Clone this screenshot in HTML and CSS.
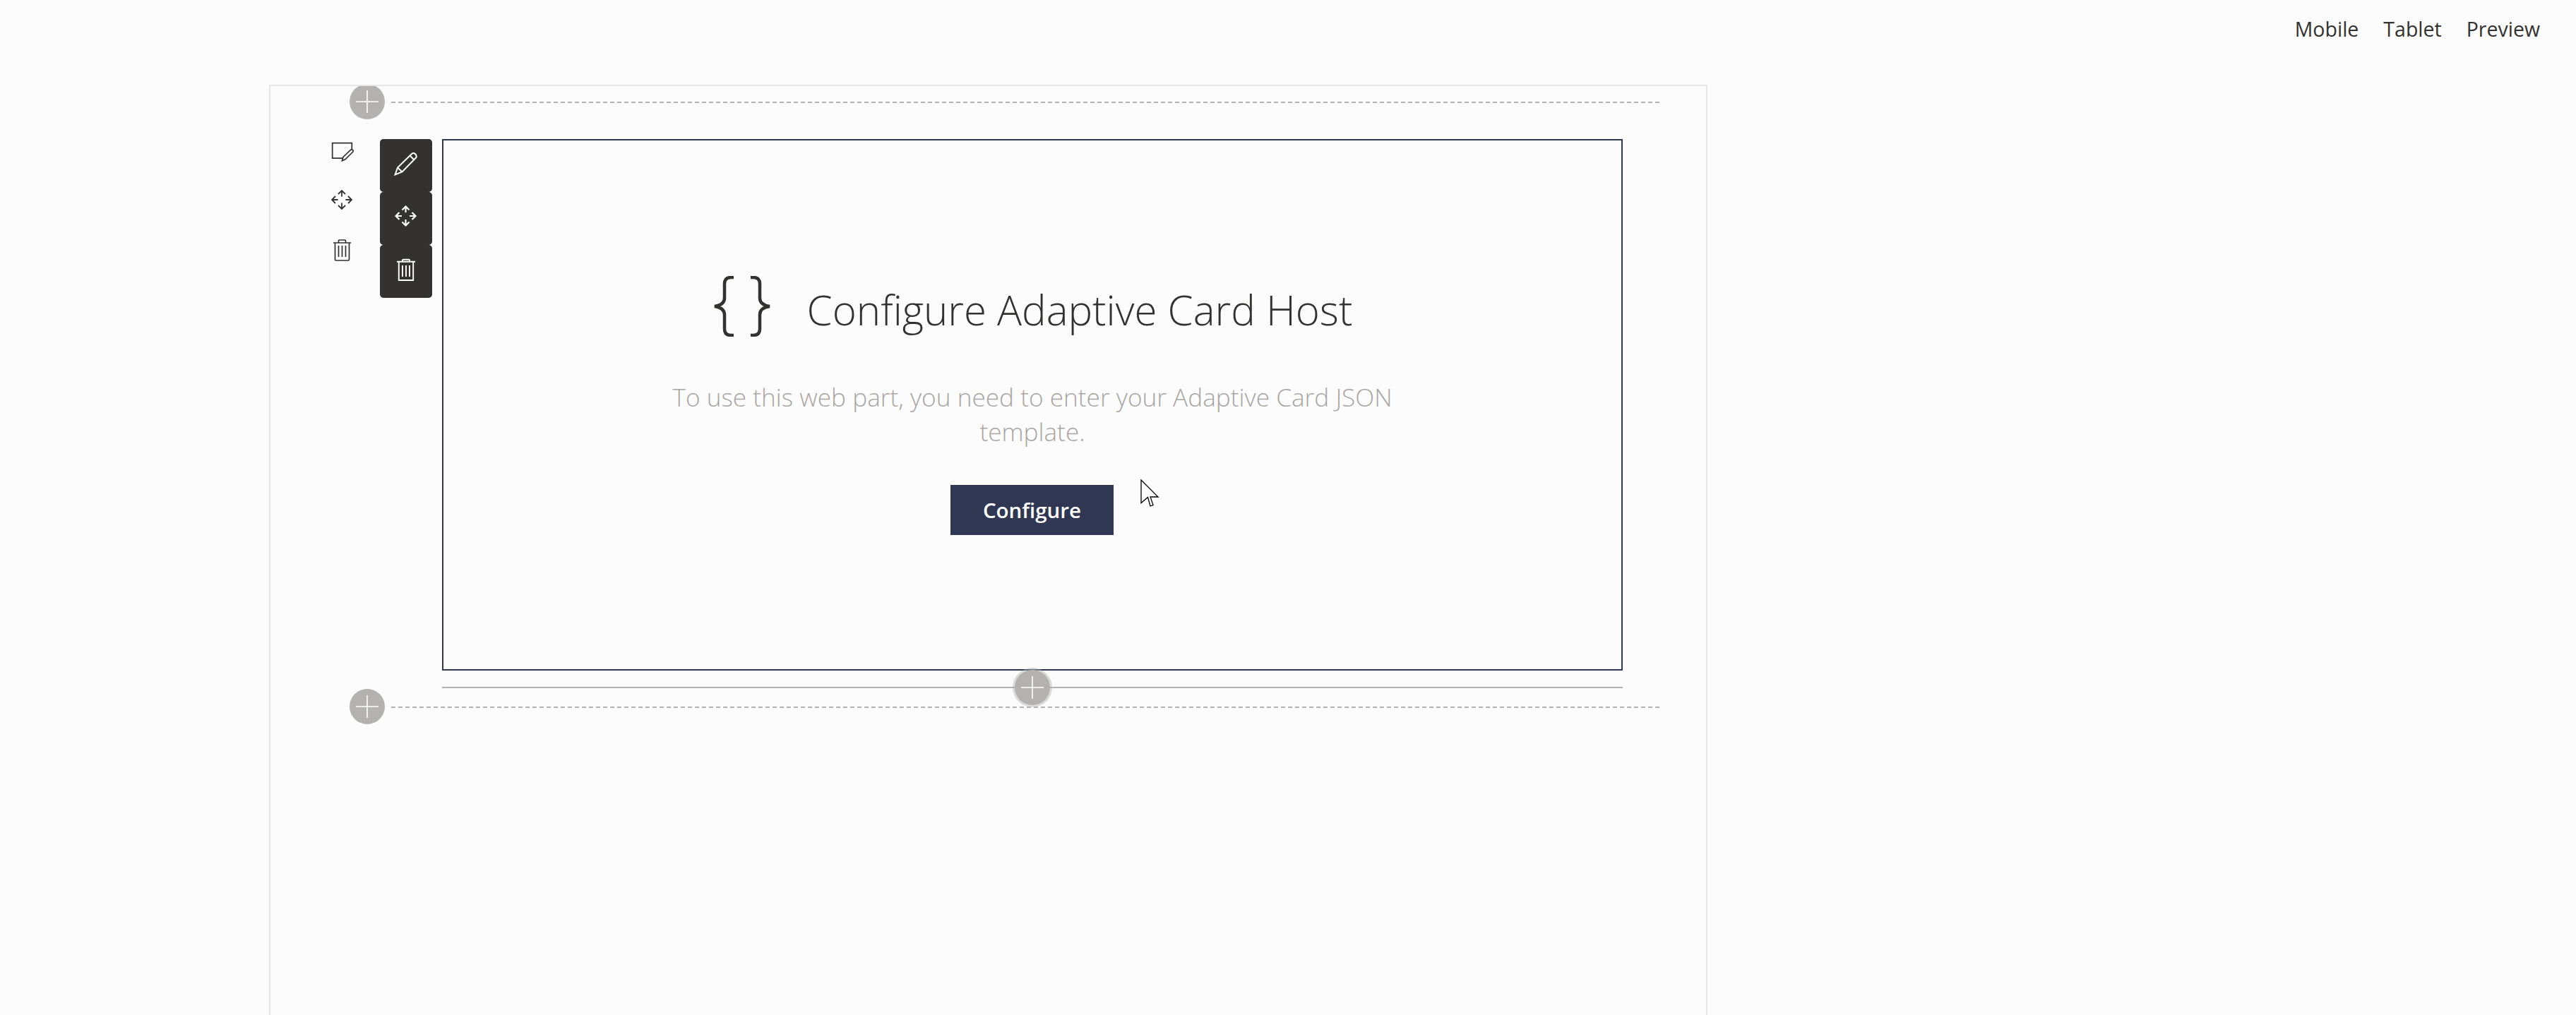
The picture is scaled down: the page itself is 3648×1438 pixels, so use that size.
FILE: index.html
```html
<!DOCTYPE html>
<html lang="en">

<head>
	<meta charset="UTF-8">
	<title>Configure Adaptive Card Host</title>
	<link rel="stylesheet" href="styles.css">
</head>

<body>
	<nav class="top-nav">
		<a class="nav-link">Mobile</a>
		<a class="nav-link">Tablet</a>
		<a class="nav-link">Preview</a>
	</nav>

	<main class="canvas">
		<div class="add-row add-row-top">
			<span class="add-circle">
				<svg width="50" height="50" viewBox="0 0 50 50"><path d="M9 25H41M25 9V41" stroke="#fff" stroke-width="1.6" fill="none"/></svg>
			</span>
			<span class="dash-line"></span>
		</div>

		<section class="section-body">
			<div class="section-tools">
				<span class="section-tool">
					<svg width="32" height="32" viewBox="0 0 32 32" fill="none" stroke="#333231" stroke-width="1.7"><path d="M16 24.2H1.7V2.700H29.300V12"/><path d="M15.500 27.800L17 22.500L27.500 12.500Q29.200 11.200 30.600 12.600Q31.800 14.200 30.400 15.500L20 25.800Z"/></svg>
				</span>
				<span class="section-tool">
					<svg width="32" height="32" viewBox="0 0 32 32" fill="none" stroke="#333231" stroke-width="1.800"><path d="M15 1.500V9.500M10 6L15 1L20 6M15 18.500V26.500M10 22L15 27L20 22M1.500 14H9.500M6 9L1 14L6 19M20.500 14H28.500M24 9L29 14L24 19"/></svg>
				</span>
				<span class="section-tool">
					<svg width="32" height="32" viewBox="0 0 32 32" fill="none" stroke="#333231" stroke-width="1.700"><path d="M3 6H28M5.500 6V29.500Q5.500 31 7 31H24Q25.500 31 25.500 29.500V6M10.500 6V3Q10.500 2 11.500 2H19.500Q20.500 2 20.500 3V6M10.500 10V26M15.500 10V26M20.500 10V26"/></svg>
				</span>
			</div>

			<div class="webpart-tools">
				<button class="tool-button">
					<svg width="34" height="34" viewBox="0 0 34 34" fill="none" stroke="#fff" stroke-width="2"><path d="M1.500 32.500L5 22.500L25 3Q27.500 1 30 3Q33 6 31 8.500L11.500 28.500Z"/><path d="M5 22.500L11.500 28.500M22.500 5.500L28.500 11.500"/></svg>
				</button>
				<button class="tool-button">
					<svg width="32" height="32" viewBox="0 0 32 32" fill="none" stroke="#fff" stroke-width="2.200"><path d="M15.500 2V10M10.500 6.500L15.500 1.500L20.500 6.500M15.500 20V28M10.500 23.500L15.500 28.500L20.500 23.500M2 15H10M6.500 10L1.500 15L6.500 20M21 15H29M24.500 10L29.500 15L24.500 20"/></svg>
				</button>
				<button class="tool-button">
					<svg width="32" height="32" viewBox="0 0 32 32" fill="none" stroke="#fff" stroke-width="1.900"><path d="M3 4.800H29M5.800 4.800V31H26.200V4.800M11 4.800V2.500Q11 1.700 12 1.700H20Q21 1.700 21 2.500V4.800M11 10V26M16 10V26M21 10V26"/></svg>
				</button>
			</div>

			<div class="webpart-frame">
				<div class="placeholder-head">
					<svg class="placeholder-icon" width="84" height="86" viewBox="0 0 84 86" fill="none" stroke="#333231" stroke-width="4.500"><path d="M30 2H26Q17 2 17 11V31Q17 41 3 43Q17 45 17 55V75Q17 84 26 84H30"/><path d="M54 2H58Q67 2 67 11V31Q67 41 81 43Q67 45 67 55V75Q67 84 58 84H54"/></svg>
					<h1 class="placeholder-title">Configure Adaptive Card Host</h1>
				</div>
				<p class="placeholder-text">To use this web part, you need to enter your Adaptive Card JSON template.</p>
				<button class="configure-button">Configure</button>
				<svg class="mouse-cursor" width="28" height="40" viewBox="0 0 28 40"><path d="M1 1V33.500L10.500 25.500L14 38L18 36.500L14 25H25Z" fill="#fcfcfc" stroke="#000" stroke-width="1.300"/></svg>
			</div>
		</section>

		<div class="webpart-add">
			<span class="add-circle add-circle-halo">
				<svg width="50" height="50" viewBox="0 0 50 50"><path d="M9 25H41M25 9V41" stroke="#fff" stroke-width="1.600" fill="none"/></svg>
			</span>
		</div>

		<div class="add-row">
			<span class="add-circle">
				<svg width="50" height="50" viewBox="0 0 50 50"><path d="M9 25H41M25 9V41" stroke="#fff" stroke-width="1.600" fill="none"/></svg>
			</span>
			<span class="dash-line"></span>
		</div>
	</main>
</body>

</html>
```

FILE: styles.css
```css
html,
body {
	height: 100%;
}

body {
	margin: 0;
	background-color: #fcfcfc;
	color: #333231;
	font-family: 'Open Sans', sans-serif;
	overflow: hidden;
}

.top-nav {
	display: flex;
	justify-content: flex-end;
	gap: 35px;
	height: 120px;
	box-sizing: border-box;
	padding: 20px 51px 0 0;
}

.nav-link {
	font-size: 28.5px;
	line-height: 42px;
}

.canvas {
	width: 2037px;
	height: 1318px;
	box-sizing: border-box;
	margin-left: 381px;
	border: 2px solid #e6e6e6;
	border-bottom: none;
	overflow: hidden;
}

.add-row {
	display: flex;
	align-items: center;
	gap: 5px;
	margin: 1px 0 0 112px;
}

.add-row-top {
	margin-top: -3px;
}

.add-circle {
	display: block;
	flex: none;
	width: 50px;
	height: 50px;
	border-radius: 50%;
	background-color: #b4b2b1;
}

.add-circle svg {
	display: block;
}

.dash-line {
	width: 1800px;
	height: 2px;
	margin-top: 1px;
	background-image: linear-gradient(90deg, #b4b2b1 6px, transparent 6px);
	background-size: 10px 2px;
	background-position: 4px 0;
}

.section-body {
	display: flex;
	margin: 28px 0 0 86px;
}

.section-tools {
	display: flex;
	flex-direction: column;
	width: 69px;
	padding-top: 3px;
}

.section-tool {
	display: block;
	height: 69px;
}

.section-tool svg {
	display: block;
}

.webpart-tools {
	display: flex;
	flex-direction: column;
	width: 74px;
	margin-right: 14px;
}

.tool-button {
	display: flex;
	justify-content: center;
	align-items: center;
	width: 74px;
	height: 75px;
	padding: 0 0 6px;
	border: none;
	border-radius: 5px;
	background-color: #333231;
}

.webpart-frame {
	position: relative;
	display: flex;
	flex-direction: column;
	align-items: center;
	width: 1672px;
	height: 753px;
	box-sizing: border-box;
	padding-top: 192px;
	border: 2px solid #2f3752;
}

.placeholder-head {
	display: flex;
	align-items: flex-start;
	gap: 50px;
}

.placeholder-title {
	margin: 6px 0 0;
	font-size: 58.2px;
	font-weight: 300;
	line-height: 84px;
}

.placeholder-text {
	width: 1100px;
	margin: 57px 0 0;
	color: #aaa6a2;
	font-size: 35.2px;
	font-weight: 300;
	line-height: 49px;
	text-align: center;
}

.configure-button {
	width: 231px;
	height: 71px;
	margin: 51px 1px 0 0;
	padding: 0;
	border: none;
	background-color: #2f3752;
	color: #ffffff;
	font-family: inherit;
	font-size: 29.5px;
	font-weight: 600;
}

.mouse-cursor {
	position: absolute;
	left: 987px;
	top: 480px;
}

.webpart-add {
	position: relative;
	width: 1672px;
	height: 2px;
	margin: 23px 0 0 243px;
	background-color: #b4b2b1;
}

.add-circle-halo {
	position: absolute;
	left: 811px;
	top: -24px;
	box-shadow: 0 0 0 3px rgba(180, 178, 177, 0.45);
}
```
